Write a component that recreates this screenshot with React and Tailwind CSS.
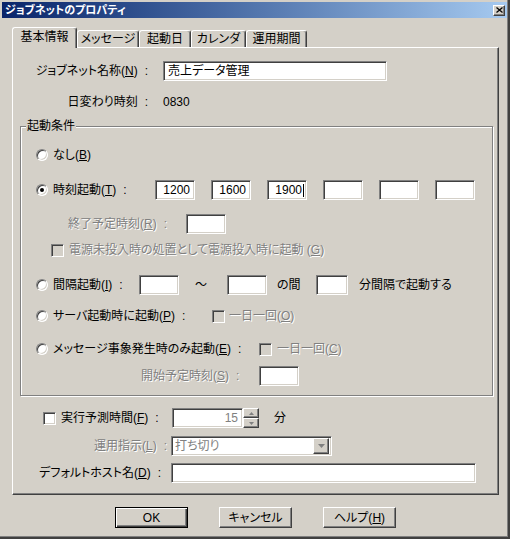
import React from 'react';

// classic 3D edges
const sunken =
  'border border-t-[#808080] border-l-[#808080] border-b-white border-r-white shadow-[inset_1px_1px_0_#404040,inset_-1px_-1px_0_#d4d0c8]';
const raised =
  'border border-t-white border-l-white border-b-[#404040] border-r-[#404040] shadow-[inset_-1px_-1px_0_#808080]';
const grey = 'text-[#808080] [text-shadow:1px_1px_0_#fff]';

const Colon = () => <span className="ml-[7px] mr-[4px]">:</span>;

const Radio = ({ checked }) => (
  <span
    className={`inline-flex w-[12px] h-[12px] shrink-0 items-center justify-center rounded-full bg-white ${sunken}`}
  >
    {checked && <span className="w-[4px] h-[4px] rounded-full bg-black" />}
  </span>
);

const Check = ({ disabled }) => (
  <span
    className={`inline-block w-[13px] h-[13px] shrink-0 ${disabled ? 'bg-[#d4d0c8]' : 'bg-white'} ${sunken}`}
  />
);

const Field = ({ w, children, className = '' }) => (
  <div
    className={`h-[20px] shrink-0 bg-white flex items-center justify-end pr-[4px] ${sunken} ${className}`}
    style={{ width: w }}
  >
    {children}
  </div>
);

const Tab = ({ label, w, active }) => (
  <div
    className={`shrink-0 flex items-center justify-center rounded-t-[3px] bg-[#d4d0c8] border-t border-l border-t-white border-l-white border-r border-r-[#404040] shadow-[inset_-1px_0_0_#808080] ${
      active ? 'h-[21px] -mb-px relative z-10 pb-[2px]' : 'h-[17px]'
    }`}
    style={{ width: w }}
  >
    {label}
  </div>
);

const Btn = ({ children, def }) => (
  <div
    className={`w-[73px] h-[21px] flex items-center justify-center ${
      def
        ? 'border border-black shadow-[inset_1px_1px_0_#fff,inset_-1px_-1px_0_#404040,inset_-2px_-2px_0_#808080]'
        : raised
    }`}
  >
    {children}
  </div>
);

const Tri = ({ down, w = 5, h = 3 }) => (
  <svg width={w} height={h} viewBox={`0 0 ${w} ${h}`} className="block">
    <polygon
      points={down ? `0,0 ${w},0 ${w / 2},${h}` : `0,${h} ${w},${h} ${w / 2},0`}
      fill="#808080"
    />
  </svg>
);

export default function App() {
  return (
    <div className="w-[510px] h-[539px] overflow-hidden bg-[#d4d0c8] border-r-2 border-b-2 border-r-[#404040] border-b-[#404040] shadow-[inset_-1px_-1px_0_#808080] pt-[2px] pl-[2px] pr-px text-[12px] leading-[14px] text-black font-['Liberation_Sans','Noto_Sans_CJK_JP',sans-serif] [font-feature-settings:'palt']">
      {/* title bar */}
      <div className="h-[16px] flex items-center justify-between bg-linear-to-r from-[#0a246a] to-[#a6caf0] pl-[3px] pr-[2px]">
        <span className="font-bold text-white text-[11px]">ジョブネットのプロパティ</span>
        <div className={`w-[12px] h-[11px] bg-[#d4d0c8] flex items-center justify-center ${raised}`}>
          <svg width="7" height="6" viewBox="0 0 7 6" className="block">
            <path d="M0.5 0.5 L6.5 5.5 M6.5 0.5 L0.5 5.5" stroke="#000" strokeWidth="1.3" />
          </svg>
        </div>
      </div>

      {/* tabs */}
      <div className="ml-[10px] mt-[9px] h-[20px] flex items-end">
        <Tab label="基本情報" w={65} active />
        <Tab label="メッセージ" w={62} />
        <Tab label="起動日" w={52} />
        <Tab label="カレンダ" w={55} />
        <Tab label="運用期間" w={61} />
      </div>

      {/* panel */}
      <div className="ml-[10px] w-[487px] h-[448px] border-t border-l border-t-white border-l-white border-r border-b border-r-[#404040] border-b-[#404040] shadow-[inset_-1px_-1px_0_#808080]">
        <div className="mt-[13px] h-[20px] flex items-center">
          <span className="w-[139px] text-right">
            ジョブネット名称(<u>N</u>)<Colon />
          </span>
          <Field w={224} className="ml-[11px] !justify-start pl-[4px]">
            売上データ管理
          </Field>
        </div>
        <div className="mt-[11px] h-[20px] flex items-center">
          <span className="w-[139px] text-right">
            日変わり時刻<Colon />
          </span>
          <span className="ml-[11px]">0830</span>
        </div>

        {/* group */}
        <div className="relative mt-[14px] ml-[7px] w-[473px] h-[270px] border border-[#808080] shadow-[inset_1px_1px_0_#fff,1px_1px_0_#fff]">
          <span className="absolute left-[5px] -top-[8px] px-[1px] bg-[#d4d0c8]">起動条件</span>

          <div className="mt-[18px] h-[20px] flex items-center pl-[15px]">
            <Radio />
            <span className="ml-[5px]">
              なし(<u>B</u>)
            </span>
          </div>

          <div className="mt-[15px] h-[20px] flex items-center pl-[15px]">
            <Radio checked />
            <span className="ml-[5px] w-[102px]">
              時刻起動(<u>T</u>)<Colon />
            </span>
            <div className="flex gap-[16px]">
              <Field w={40}>1200</Field>
              <Field w={40}>1600</Field>
              <Field w={40} className="!pr-[2px]">
                1900<span className="ml-px w-px h-[13px] bg-black" />
              </Field>
              <Field w={40} />
              <Field w={40} />
              <Field w={40} />
            </div>
          </div>

          <div className="mt-[14px] h-[20px] flex items-center pl-[47px]">
            <span className={`w-[118px] ${grey}`}>
              終了予定時刻(<u>R</u>)<Colon />
            </span>
            <Field w={40} />
          </div>

          <div className="mt-[6px] h-[20px] flex items-center pl-[30px]">
            <Check disabled />
            <span className={`ml-[5px] ${grey}`}>
              電源未投入時の処置として電源投入時に起動 (<u>G</u>)
            </span>
          </div>

          <div className="mt-[15px] h-[20px] flex items-center pl-[15px]">
            <Radio />
            <span className="ml-[5px] w-[86px]">
              間隔起動(<u>I</u>)<Colon />
            </span>
            <Field w={40} />
            <span className="w-[48px] pl-[16px]">～</span>
            <Field w={40} />
            <span className="w-[49px] pl-[10px]">の間</span>
            <Field w={32} />
            <span className="ml-[11px]">分間隔で起動する</span>
          </div>

          <div className="mt-[11px] h-[20px] flex items-center pl-[15px]">
            <Radio />
            <span className="ml-[5px] w-[159px]">
              サーバ起動時に起動(<u>P</u>)<Colon />
            </span>
            <Check disabled />
            <span className={`ml-[4px] ${grey}`}>
              一日一回(<u>O</u>)
            </span>
          </div>

          <div className="mt-[13px] h-[20px] flex items-center pl-[15px]">
            <Radio />
            <span className="ml-[5px] w-[206px]">
              メッセージ事象発生時のみ起動(<u>E</u>)<Colon />
            </span>
            <Check disabled />
            <span className={`ml-[5px] ${grey}`}>
              一日一回(<u>C</u>)
            </span>
          </div>

          <div className="mt-[7px] h-[20px] flex items-center pl-[120px]">
            <span className={`w-[118px] ${grey}`}>
              開始予定時刻(<u>S</u>)<Colon />
            </span>
            <Field w={40} />
          </div>
        </div>

        {/* bottom fields */}
        <div className="mt-[12px] h-[20px] flex items-center pl-[30px]">
          <Check />
          <span className="ml-[5px] w-[111px]">
            実行予測時間(<u>F</u>)<Colon />
          </span>
          <Field w={71}>
            <span className="text-[#808080]">15</span>
          </Field>
          <div className="flex flex-col w-[16px] h-[20px]">
            <div className={`h-[10px] bg-[#d4d0c8] flex items-center justify-center ${raised}`}>
              <Tri />
            </div>
            <div className={`h-[10px] bg-[#d4d0c8] flex items-center justify-center ${raised}`}>
              <Tri down />
            </div>
          </div>
          <span className="ml-[15px]">分</span>
        </div>

        <div className="mt-[8px] h-[20px] flex items-center">
          <span className={`w-[158px] text-right ${grey}`}>
            運用指示(<u>L</u>)<Colon />
          </span>
          <div className={`w-[161px] h-[20px] bg-white flex items-center justify-between pl-[3px] pr-[2px] ${sunken}`}>
            <span className="text-[#808080]">打ち切り</span>
            <div className={`w-[16px] h-[16px] bg-[#d4d0c8] flex items-center justify-center ${raised}`}>
              <Tri down w={7} h={4} />
            </div>
          </div>
        </div>

        <div className="mt-[7px] h-[20px] flex items-center">
          <span className="w-[152px] text-right">
            デフォルトホスト名(<u>D</u>)<Colon />
          </span>
          <Field w={305} className="ml-[6px]" />
        </div>
      </div>

      {/* buttons */}
      <div className="mt-[12px] ml-[113px] flex gap-[31px]">
        <Btn def>OK</Btn>
        <Btn>キャンセル</Btn>
        <Btn>
          ヘルプ(<u>H</u>)
        </Btn>
      </div>
    </div>
  );
}
